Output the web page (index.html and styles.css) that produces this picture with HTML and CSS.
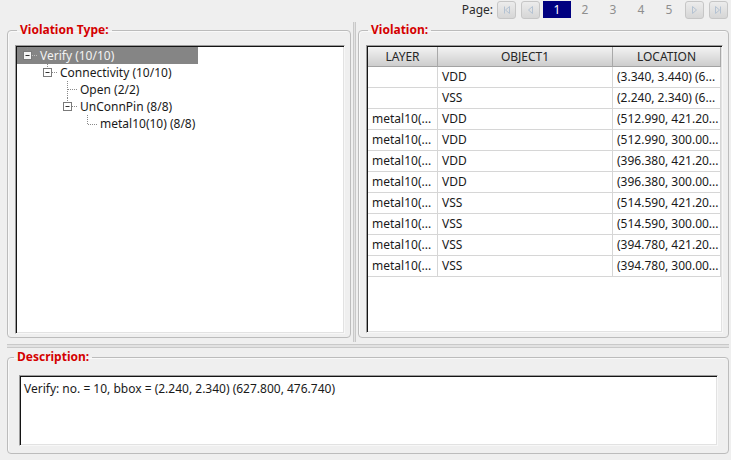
FILE: index.html
```html
<!DOCTYPE html>
<html>
<head>
<meta charset="utf-8">
<link rel="stylesheet" href="styles.css">
</head>
<body>
<div class="page">
  <div class="pager">
    <span class="pager-label">Page:</span>
    <span class="pbtn first"><svg width="17" height="16" viewBox="0 0 17 16"><path d="M6.5 4.5v7M11.5 4.5L7.5 8l4 3.5z" fill="none" stroke="#b4c2d2" stroke-width="1"/></svg></span>
    <span class="pbtn prev"><svg width="17" height="16" viewBox="0 0 17 16"><path d="M10.5 4.5L6.5 8l4 3.5z" fill="none" stroke="#b4c2d2" stroke-width="1"/></svg></span>
    <span class="pnum current">1</span>
    <span class="pnum">2</span>
    <span class="pnum">3</span>
    <span class="pnum">4</span>
    <span class="pnum">5</span>
    <span class="pbtn next"><svg width="17" height="16" viewBox="0 0 17 16"><path d="M6.5 4.5L10.5 8l-4 3.5z" fill="none" stroke="#b4c2d2" stroke-width="1"/></svg></span>
    <span class="pbtn last"><svg width="17" height="16" viewBox="0 0 17 16"><path d="M10.5 4.5v7M5.5 4.5L9.5 8l-4 3.5z" fill="none" stroke="#b4c2d2" stroke-width="1"/></svg></span>
  </div>

  <div class="main">
    <fieldset class="group group-left">
      <legend>Violation Type:</legend>
      <div class="sunken tree">
        <div class="trow level0 selected">
          <svg class="branch" width="20" height="17" viewBox="0 0 20 17"><path d="M10.5 0v3" stroke="#8a8a8a" stroke-dasharray="1 1" fill="none"/><rect x="6.5" y="4.5" width="8" height="8" fill="#f4f4f4" stroke="#7a7a7a"/><path d="M8.5 8.5h4" stroke="#333"/><path d="M15 8.5h5" stroke="#bdbdbd" stroke-dasharray="1 1"/></svg>
          <span class="tlabel">Verify (10/10)</span>
        </div>
        <div class="trow level1">
          <svg class="branch" width="20" height="17" viewBox="0 0 20 17"><path d="M10.5 0v4" stroke="#8a8a8a" stroke-dasharray="1 1" fill="none"/><rect x="6.5" y="4.5" width="8" height="8" fill="#fff" stroke="#7a7a7a"/><path d="M8.5 8.5h4" stroke="#333"/><path d="M15 8.5h5" stroke="#8a8a8a" stroke-dasharray="1 1"/></svg>
          <span class="tlabel">Connectivity (10/10)</span>
        </div>
        <div class="trow level2">
          <svg class="branch" width="20" height="17" viewBox="0 0 20 17"><path d="M10.5 0v17M11 8.5h9" stroke="#8a8a8a" stroke-dasharray="1 1" fill="none"/></svg>
          <span class="tlabel">Open (2/2)</span>
        </div>
        <div class="trow level2">
          <svg class="branch" width="20" height="17" viewBox="0 0 20 17"><path d="M10.5 0v4" stroke="#8a8a8a" stroke-dasharray="1 1" fill="none"/><rect x="6.5" y="4.5" width="8" height="8" fill="#fff" stroke="#7a7a7a"/><path d="M8.5 8.5h4" stroke="#333"/><path d="M15 8.5h5" stroke="#8a8a8a" stroke-dasharray="1 1"/></svg>
          <span class="tlabel">UnConnPin (8/8)</span>
        </div>
        <div class="trow level3">
          <svg class="branch" width="20" height="17" viewBox="0 0 20 17"><path d="M10.5 0v9M11 9.5h9" stroke="#8a8a8a" stroke-dasharray="1 1" fill="none"/></svg>
          <span class="tlabel">metal10(10) (8/8)</span>
        </div>
      </div>
    </fieldset>

    <div class="vsplit"><div class="vgrip"></div></div>

    <fieldset class="group group-right">
      <legend>Violation:</legend>
      <div class="sunken grid">
        <div class="grow head">
          <div class="cell">LAYER</div>
          <div class="cell">OBJECT1</div>
          <div class="cell">LOCATION</div>
        </div>
        <div class="grow"><div class="cell"></div><div class="cell">VDD</div><div class="cell">(3.340, 3.440) (6...</div></div>
        <div class="grow"><div class="cell"></div><div class="cell">VSS</div><div class="cell">(2.240, 2.340) (6...</div></div>
        <div class="grow"><div class="cell">metal10(...</div><div class="cell">VDD</div><div class="cell">(512.990, 421.20...</div></div>
        <div class="grow"><div class="cell">metal10(...</div><div class="cell">VDD</div><div class="cell">(512.990, 300.00...</div></div>
        <div class="grow"><div class="cell">metal10(...</div><div class="cell">VDD</div><div class="cell">(396.380, 421.20...</div></div>
        <div class="grow"><div class="cell">metal10(...</div><div class="cell">VDD</div><div class="cell">(396.380, 300.00...</div></div>
        <div class="grow"><div class="cell">metal10(...</div><div class="cell">VSS</div><div class="cell">(514.590, 421.20...</div></div>
        <div class="grow"><div class="cell">metal10(...</div><div class="cell">VSS</div><div class="cell">(514.590, 300.00...</div></div>
        <div class="grow"><div class="cell">metal10(...</div><div class="cell">VSS</div><div class="cell">(394.780, 421.20...</div></div>
        <div class="grow"><div class="cell">metal10(...</div><div class="cell">VSS</div><div class="cell">(394.780, 300.00...</div></div>
      </div>
    </fieldset>
  </div>

  <div class="hsplit"><div class="hgrip"></div></div>

  <fieldset class="group group-desc">
    <legend>Description:</legend>
    <div class="sunken desc">Verify: no. = 10, bbox = (2.240, 2.340) (627.800, 476.740)</div>
  </fieldset>
</div>
</body>
</html>
```

FILE: styles.css
```css
* { box-sizing: border-box; }

html, body {
  margin: 0;
  padding: 0;
  background: #efefef;
  font-family: "Noto Sans", "Open Sans", sans-serif;
  font-size: 12px;
  color: #1c1c1c;
}

.page {
  width: 731px;
  height: 460px;
  padding: 0 2px 0 7px;
  overflow: hidden;
}

/* pager */
.pager {
  height: 22px;
  display: flex;
  justify-content: flex-end;
  align-items: flex-start;
  padding-top: 1px;
  padding-right: 1px;
}
.pager-label {
  color: #2a2a2a;
  line-height: 17px;
  margin-right: 4px;
}
.pbtn {
  width: 19px;
  height: 18px;
  border: 1px solid #c6c6c6;
  border-radius: 3px;
  background: linear-gradient(#ececec, #d6d6d6);
  display: flex;
  align-items: center;
  justify-content: center;
}
.pbtn.first { margin-right: 5px; }
.pbtn.prev { margin-right: 3px; }
.pbtn.next { margin-left: 2px; margin-right: 5px; }
.pnum {
  width: 28px;
  height: 17px;
  line-height: 17px;
  text-align: center;
  color: #8e8e8e;
}
.pnum.current {
  background: #000080;
  color: #ffffff;
}

/* main split */
.main {
  height: 320px;
  display: flex;
}

.group {
  margin: 0;
  border: 1px solid #bcbcbc;
  border-radius: 4px;
  box-shadow: inset 1px 1px 0 #f9f9f9;
  min-width: 0;
}
.group legend {
  color: #d40000;
  font-weight: bold;
  line-height: 16px;
  padding: 0 3px;
  margin-left: 2px;
}

.group-left {
  width: 344px;
  height: 316px;
  padding: 7px 5px 3px 7px;
}
.group-right {
  width: 371px;
  height: 316px;
  padding: 7px 5px 3px 7px;
}

.vsplit {
  width: 7px;
  height: 320px;
}
.vgrip {
  margin-left: 2px;
  width: 3px;
  height: 100%;
  border-left: 1px solid #c9c9c9;
  border-right: 1px solid #c9c9c9;
  background: #e2e2e2;
}

.hsplit {
  height: 7px;
  padding-top: 2px;
}
.hgrip {
  height: 4px;
  border-top: 1px solid #c9c9c9;
  border-bottom: 1px solid #c9c9c9;
  background: #e2e2e2;
}

.sunken {
  background: #ffffff;
  border: 1px solid;
  border-color: #9c9c9c #f7f7f7 #f7f7f7 #9c9c9c;
  box-shadow: inset 1px 1px 0 #141414, inset -1px -1px 0 #e2e2e2;
}

/* tree */
.tree {
  height: 289px;
  padding: 1px 0 0 1px;
}
.trow {
  height: 17px;
  display: flex;
  align-items: center;
  white-space: nowrap;
}
.trow .branch { flex: none; }
.tlabel {
  margin-left: 3px;
  line-height: 17px;
  color: #1a1a1a;
}
.level1 { padding-left: 20px; }
.level2 { padding-left: 40px; }
.level3 { padding-left: 60px; }
.trow.selected {
  width: 181px;
  background: #858585;
}
.trow.selected .tlabel { color: #f2f2f2; }

/* grid */
.grid {
  height: 288px;
  padding: 1px 0 0 1px;
}
.grow {
  display: grid;
  grid-template-columns: 70px 175px 108px;
  height: 21px;
}
.cell {
  border-right: 1px solid #d6d6d6;
  border-bottom: 1px solid #d6d6d6;
  padding-left: 4px;
  line-height: 20px;
  white-space: nowrap;
  overflow: hidden;
  color: #1a1a1a;
}
.grow.head {
  height: 20px;
}
.grow.head .cell {
  background: linear-gradient(#f3f3f3, #cdcdcd);
  border-right: 1px solid #a9a9a9;
  border-bottom: 1px solid #a3a3a3;
  text-align: center;
  padding-left: 0;
  line-height: 19px;
  color: #262626;
}

/* description */
.group-desc {
  width: 722px;
  height: 105px;
  padding: 10px 10px 7px 11px;
}
.group-desc legend {
  margin-left: -5px;
}
.desc {
  height: 71px;
  padding: 5px 4px 0 4px;
  line-height: 16px;
  color: #1a1a1a;
}
```
